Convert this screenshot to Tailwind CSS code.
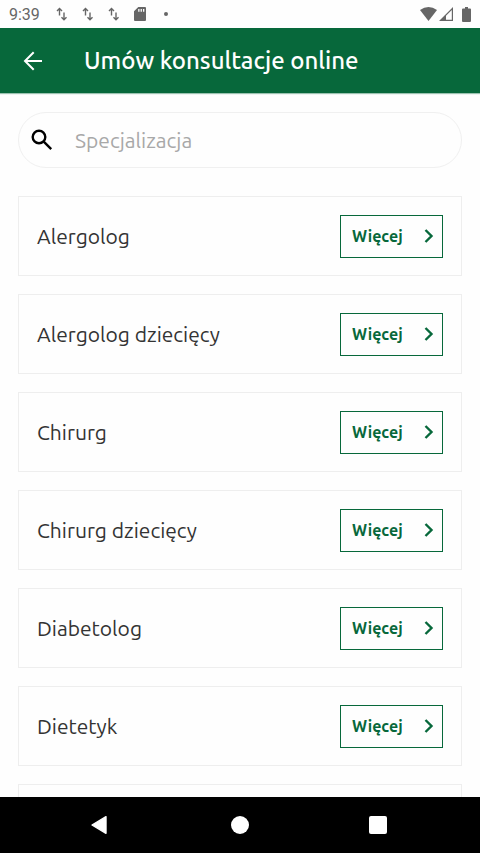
<!DOCTYPE html>
<html lang="pl">
<head>
<meta charset="utf-8">
<meta name="viewport" content="width=device-width, initial-scale=1">
<title>Umów konsultacje online</title>
<script src="https://cdn.jsdelivr.net/npm/@tailwindcss/browser@4"></script>
</head>
<body class="flex h-screen flex-col overflow-hidden bg-[#fefefe] font-[Ubuntu,'Noto_Sans',sans-serif] text-[#333333]">
<svg class="hidden" aria-hidden="true">
  <symbol id="arrows" viewBox="0 0 12 14"><path d="M3.500 8.500V2M1 4l2.500-2.500L6 4M8 5.500v7M5.500 10.300l2.500 2.500 2.500-2.500" fill="none" stroke="currentColor" stroke-width="1.400"/></symbol>
  <symbol id="chevron" viewBox="0 0 10 16"><path d="M1.500 2l6 6-6 6" fill="none" stroke="currentColor" stroke-width="2.400"/></symbol>
</svg>

<div class="flex h-7 shrink-0 items-center pr-[9px] pl-[9px] text-[#666666]">
  <span class="w-[47px] pt-0.5 font-[Roboto,sans-serif] text-base">9:39</span>
  <div class="flex flex-1 items-center gap-3.5">
    <svg class="h-3.5 w-3"><use href="#arrows"/></svg>
    <svg class="h-3.5 w-3"><use href="#arrows"/></svg>
    <svg class="h-3.5 w-3"><use href="#arrows"/></svg>
    <svg class="h-3.5 w-3" viewBox="0 0 12 14"><path fill="currentColor" fill-rule="evenodd" d="M4.300 0H11a1 1 0 0 1 1 1v12a1 1 0 0 1-1 1H1a1 1 0 0 1-1-1V4.300zM4.200 2v2.800h1.300V2zM6.600 2v2.800h1.300V2zM9 2v2.800h1.300V2z"/></svg>
    <span class="ml-1 size-1 rounded-full bg-[#666666]"></span>
  </div>
  <svg class="mr-0.5 h-3.5 w-[17px]" viewBox="0 0 17 14"><path fill="currentColor" d="M0 3Q8.500-3 17 3L8.500 14z"/></svg>
  <svg class="mr-[9px] h-3.5 w-3.5" viewBox="0 0 14 14"><path fill="currentColor" fill-rule="evenodd" d="M14 0v14H0zM12.800 3 7 8.800V12.800h5.800z"/></svg>
  <svg class="h-[15px] w-[9px]" viewBox="0 0 9 15"><path fill="currentColor" d="M3 0h3v1.500h2a1 1 0 0 1 1 1V14a1 1 0 0 1-1 1H1a1 1 0 0 1-1-1V2.500a1 1 0 0 1 1-1h2z"/></svg>
</div>

<header class="flex h-[65px] shrink-0 items-center bg-[#07683b] px-[18px] text-white shadow-[0_1px_1px_#07683b66]">
  <button type="button" aria-label="Wstecz" class="flex size-[30px] items-center justify-center">
    <svg class="size-5" viewBox="0 0 20 20" fill="none" stroke="currentColor" stroke-width="2"><path d="M19 10H2.500M10.700 1.200 2 10l8.700 8.800"/></svg>
  </button>
  <h1 class="ml-9 text-[24px] leading-8 font-medium">Umów konsultacje online</h1>
</header>

<main class="min-h-0 flex-1 overflow-hidden px-[18px] pt-[19px]">
  <label class="flex h-14 items-center rounded-full border border-[#f0f0f0] pl-3">
    <svg class="size-[22px] shrink-0 text-black" viewBox="0 0 22 22" fill="none" stroke="currentColor" stroke-width="2.400"><circle cx="8" cy="8" r="6.300"/><path d="M12.700 12.700l7.500 7.500"/></svg>
    <input type="text" aria-label="Specjalizacja" placeholder="Specjalizacja" class="ml-[22px] min-w-0 flex-1 bg-transparent text-[21px] leading-7 outline-none placeholder:text-[#a8a8a8]">
  </label>

  <ul class="mt-7 flex flex-col gap-[18px]">
    <li class="flex h-20 shrink-0 items-center justify-between border border-[#eeeeee] px-[18px]">
      <span class="text-[21px] leading-7">Alergolog</span>
      <button type="button" class="flex h-[43px] w-[103px] items-center justify-between border border-[#07683b] pr-2 pl-[11px] text-base font-bold text-[#07683b]">Więcej<svg class="h-4 w-2.5"><use href="#chevron"/></svg></button>
    </li>
    <li class="flex h-20 shrink-0 items-center justify-between border border-[#eeeeee] px-[18px]">
      <span class="text-[21px] leading-7">Alergolog dziecięcy</span>
      <button type="button" class="flex h-[43px] w-[103px] items-center justify-between border border-[#07683b] pr-2 pl-[11px] text-base font-bold text-[#07683b]">Więcej<svg class="h-4 w-2.5"><use href="#chevron"/></svg></button>
    </li>
    <li class="flex h-20 shrink-0 items-center justify-between border border-[#eeeeee] px-[18px]">
      <span class="text-[21px] leading-7">Chirurg</span>
      <button type="button" class="flex h-[43px] w-[103px] items-center justify-between border border-[#07683b] pr-2 pl-[11px] text-base font-bold text-[#07683b]">Więcej<svg class="h-4 w-2.5"><use href="#chevron"/></svg></button>
    </li>
    <li class="flex h-20 shrink-0 items-center justify-between border border-[#eeeeee] px-[18px]">
      <span class="text-[21px] leading-7">Chirurg dziecięcy</span>
      <button type="button" class="flex h-[43px] w-[103px] items-center justify-between border border-[#07683b] pr-2 pl-[11px] text-base font-bold text-[#07683b]">Więcej<svg class="h-4 w-2.5"><use href="#chevron"/></svg></button>
    </li>
    <li class="flex h-20 shrink-0 items-center justify-between border border-[#eeeeee] px-[18px]">
      <span class="text-[21px] leading-7">Diabetolog</span>
      <button type="button" class="flex h-[43px] w-[103px] items-center justify-between border border-[#07683b] pr-2 pl-[11px] text-base font-bold text-[#07683b]">Więcej<svg class="h-4 w-2.5"><use href="#chevron"/></svg></button>
    </li>
    <li class="flex h-20 shrink-0 items-center justify-between border border-[#eeeeee] px-[18px]">
      <span class="text-[21px] leading-7">Dietetyk</span>
      <button type="button" class="flex h-[43px] w-[103px] items-center justify-between border border-[#07683b] pr-2 pl-[11px] text-base font-bold text-[#07683b]">Więcej<svg class="h-4 w-2.5"><use href="#chevron"/></svg></button>
    </li>
    <li class="h-20 shrink-0 border border-[#eeeeee]"></li>
  </ul>
</main>

<nav class="flex h-14 shrink-0 items-center justify-center gap-[110px] bg-black text-white">
  <button type="button" aria-label="Cofnij" class="flex size-7 items-center justify-start"><svg class="h-5 w-[22px]" viewBox="0 0 22 20"><path d="M4 10 18 1.700v16.600z" fill="currentColor" stroke="currentColor" stroke-width="1.400" stroke-linejoin="round"/></svg></button>
  <button type="button" aria-label="Ekran główny" class="flex size-7 items-center justify-center"><span class="size-[18px] rounded-full bg-white"></span></button>
  <button type="button" aria-label="Ostatnie aplikacje" class="flex size-7 items-center justify-center"><span class="size-[18px] rounded-xs bg-white"></span></button>
</nav>
</body>
</html>
